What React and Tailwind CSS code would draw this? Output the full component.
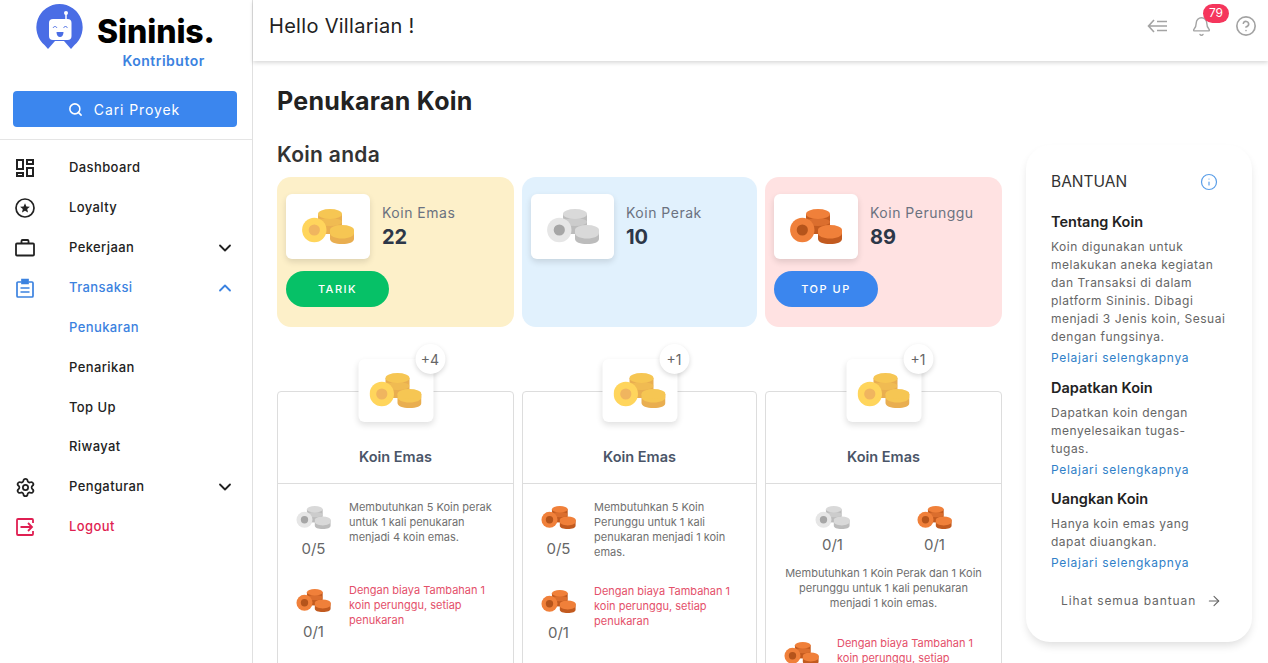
import React from 'react';
import {
  ArrowRight,
  Bell,
  ChevronDown,
  ChevronUp,
  CircleHelp,
  Info,
  Search,
  Settings,
} from 'lucide-react';

const gold = { top: '#f6c653', side: '#e9ae50', face: '#ffd55c', hole: '#f0b55f' };
const silver = { top: '#d9d9d9', side: '#bcbcbc', face: '#e6e6e6', hole: '#a6a6a6' };
const bronze = { top: '#f0803a', side: '#c25a1f', face: '#f0803a', hole: '#b5541b' };

const Coins = ({ c, className }) => (
  <svg viewBox="0 0 52 35" className={className}>
    <path d="M16 5v20h24V5z" fill={c.side} />
    <ellipse cx="28" cy="13" rx="12" ry="4" fill={c.top} opacity="0.55" />
    <ellipse cx="28" cy="5" rx="12" ry="5" fill={c.top} />
    <path d="M28 21v9c0 3 5 5 12 5s12-2 12-5v-9z" fill={c.side} />
    <path d="M28 21v3c0 3 5 5.5 12 5.5s12-2.5 12-5.5v-3z" fill={c.top} />
    <ellipse cx="40" cy="21" rx="12" ry="5" fill={c.top} />
    <circle cx="12.3" cy="21" r="12.2" fill={c.face} />
    <circle cx="12.3" cy="21" r="5.6" fill={c.hole} />
  </svg>
);

const Logo = () => (
  <svg viewBox="0 0 47 46" className="w-[47px] h-[46px] shrink-0">
    <path d="M23.500 0a23.300 23.300 0 0 0-15 41l3.500 4 7-8h9l7 8 3.500-4A23.300 23.300 0 0 0 23.500 0z" fill="#4a6de5" />
    <rect x="13" y="15" width="22.500" height="21" rx="4" fill="#fff" />
    <path d="M30 15V10" stroke="#fff" strokeWidth="1.500" />
    <circle cx="30" cy="9" r="2" fill="#fff" />
    <path d="M17 24c1-2 3-2 4 0M27.500 24c1-2 3-2 4 0" stroke="#4a6de5" strokeWidth="1" fill="none" />
    <path d="M20.500 28h7c0 3-1.500 5-3.500 5s-3.500-2-3.500-5z" fill="#4a6de5" />
  </svg>
);

const DashIcon = () => (
  <svg viewBox="0 0 20 20" className="w-5 h-5" fill="none" stroke="currentColor" strokeWidth="2">
    <rect x="2" y="2" width="6" height="9" />
    <rect x="12" y="2" width="6" height="4" />
    <rect x="2" y="15" width="6" height="3" />
    <rect x="12" y="10" width="6" height="8" />
  </svg>
);

const StarIcon = () => (
  <svg viewBox="0 0 20 20" className="w-5 h-5">
    <circle cx="10" cy="10" r="9" fill="none" stroke="currentColor" strokeWidth="1.700" />
    <path d="M10 5.200l1.400 3.300 3.500.3-2.700 2.300.8 3.500-3-1.800-3 1.800.8-3.500-2.700-2.300 3.500-.3z" fill="currentColor" />
  </svg>
);

const CaseIcon = () => (
  <svg viewBox="0 0 20 20" className="w-5 h-5" fill="none" stroke="currentColor" strokeWidth="1.800">
    <rect x="1" y="5.500" width="18" height="12" rx="1" />
    <path d="M6.500 5.500V3a1 1 0 0 1 1-1h5a1 1 0 0 1 1 1v2.500" />
  </svg>
);

const ClipIcon = () => (
  <svg viewBox="0 0 20 20" className="w-5 h-5" fill="none" stroke="currentColor" strokeWidth="1.700">
    <path d="M6.500 4H3a1 1 0 0 0-1 1v13a1 1 0 0 0 1 1h14a1 1 0 0 0 1-1V5a1 1 0 0 0-1-1h-3.500" />
    <path d="M7 1.500h6v4H7z" fill="currentColor" />
    <path d="M5.500 10h9M5.500 14h9" />
  </svg>
);

const LogoutIcon = () => (
  <svg viewBox="0 0 20 20" className="w-5 h-5" fill="none" stroke="currentColor" strokeWidth="1.800">
    <path d="M18 6V3a1 1 0 0 0-1-1H3a1 1 0 0 0-1 1v14a1 1 0 0 0 1 1h14a1 1 0 0 0 1-1v-3" />
    <path d="M5.500 10H17M13 6l4 4-4 4" />
  </svg>
);

const MenuBackIcon = () => (
  <svg viewBox="0 0 20 14" className="w-5 h-[14px]" fill="none" stroke="currentColor" strokeWidth="1.600">
    <path d="M7 1L1.500 7 7 13M2 7h18M10 2.500h10M10 11.500h10" />
  </svg>
);

const menu = [
  { label: 'Dashboard', icon: <DashIcon /> },
  { label: 'Loyalty', icon: <StarIcon /> },
  { label: 'Pekerjaan', icon: <CaseIcon />, arrow: 'down' },
  { label: 'Transaksi', icon: <ClipIcon />, arrow: 'up', color: 'text-[#3b82e0]' },
  { label: 'Penukaran', color: 'text-[#3b82e0]' },
  { label: 'Penarikan' },
  { label: 'Top Up' },
  { label: 'Riwayat' },
  { label: 'Pengaturan', icon: <Settings size={21} strokeWidth={2} />, arrow: 'down' },
  { label: 'Logout', icon: <LogoutIcon />, color: 'text-[#df1f52]' },
];

const Sidebar = () => (
  <aside className="w-[253px] shrink-0 h-full bg-white border-r border-[#e0e0e0]">
    <div className="h-[140px] border-b border-[#e5e5e5] px-[13px]">
      <div className="flex pl-[23px] pt-[4px] h-[91px]">
        <Logo />
        <div className="ml-[14px] flex flex-col items-end">
          <div className="text-[32px] leading-[34px] mt-[11px] font-extrabold text-black tracking-[-0.1px]">Sininis.</div>
          <div className="text-[14px] leading-[18px] mt-[3px] mr-[10px] font-semibold text-[#3b82e0] tracking-[0.5px]">Kontributor</div>
        </div>
      </div>
      <button className="w-[224px] h-9 rounded bg-[#3b86ee] text-white flex items-center justify-center gap-[11px] pr-[2px] text-[14px] tracking-[0.9px]">
        <Search size={15} strokeWidth={2.500} />
        Cari Proyek
      </button>
    </div>
    <ul className="pt-2">
      {menu.map((item) => (
        <li key={item.label} className={`h-[39.900px] flex items-center text-[13px] font-medium tracking-[0.4px] ${item.color || 'text-[#222]'}`}>
          <span className="w-[69px] pl-[15px] shrink-0">{item.icon}</span>
          <span>{item.label}</span>
          {item.arrow === 'down' && <ChevronDown size={20} strokeWidth={2.200} className="ml-auto mr-[17px]" />}
          {item.arrow === 'up' && <ChevronUp size={20} strokeWidth={2.200} className="ml-auto mr-[17px]" />}
        </li>
      ))}
    </ul>
  </aside>
);

const Header = () => (
  <header className="h-[61px] shrink-0 bg-white shadow-[0_2px_4px_rgba(0,0,0,0.15)] flex items-center pl-4 pr-[11px] pb-[9px] relative z-10">
    <h1 className="text-[20px] text-[#222] tracking-[0.3px]">Hello Villarian !</h1>
    <div className="ml-auto flex items-center text-[#a3a3a3]">
      <MenuBackIcon />
      <div className="relative ml-[24px] mr-[23px]">
        <Bell size={21} strokeWidth={1.600} />
        <span className="absolute -top-[12px] left-[12px] w-[26px] h-[19px] rounded-full bg-[#f5365c] text-white text-[12px] flex items-center justify-center">79</span>
      </div>
      <CircleHelp size={22} strokeWidth={1.800} />
    </div>
  </header>
);

const BalanceCard = ({ coin, name, value, bg, w, tile, button, buttonBg, buttonW }) => (
  <div className={`${w} h-[150px] rounded-[14px] px-[9px] pt-[17px] ${bg}`}>
    <div className="flex items-center gap-3">
      <div className={`${tile} h-[65px] rounded-md bg-white shadow-[0_3px_6px_rgba(0,0,0,0.12)] flex items-center justify-center`}>
        <Coins c={coin} className="w-[52px] h-[35px]" />
      </div>
      <div>
        <div className="text-[14px] leading-5 text-[#6b7280] tracking-[0.5px]">{name}</div>
        <div className="text-[20px] leading-7 font-bold text-[#2d3748]">{value}</div>
      </div>
    </div>
    {button && (
      <button className={`mt-3 h-9 rounded-full text-white text-[11px] font-medium tracking-[1.500px] ${buttonW} ${buttonBg}`}>{button}</button>
    )}
  </div>
);

const CoinCount = ({ c, count, gap, className }) => (
  <div className={`flex flex-col items-center ${className || ''}`}>
    <Coins c={c} className="w-[35px] h-[23px]" />
    <div className={`text-[15px] leading-5 text-[#666] ${gap}`}>{count}</div>
  </div>
);

const note = 'Dengan biaya Tambahan 1 koin perunggu, setiap penukaran';

const ExchangeCard = ({ w, plus, children }) => (
  <div className={`${w} relative h-[340px] border border-[#ddd] rounded bg-white`}>
    <div className="absolute left-1/2 -translate-x-1/2 -top-[33px] w-[75px] h-[63px] rounded-md bg-white shadow-[0_3px_6px_rgba(0,0,0,0.12)] flex items-center justify-center">
      <Coins c={gold} className="w-[52px] h-[35px]" />
      <span className="absolute -top-[15px] -right-[12px] w-[30px] h-[30px] rounded-full bg-white shadow-[0_2px_5px_rgba(0,0,0,0.15)] text-[14px] text-[#666] flex items-center justify-center">{plus}</span>
    </div>
    <div className="h-[92px] border-b border-[#ddd] pt-[55px] text-center text-[14.500px] leading-5 font-semibold text-[#4a5568]">Koin Emas</div>
    {children}
  </div>
);

const Row = ({ c, count, text, red }) => (
  <div className="flex pl-[18px]">
    <CoinCount c={c} count={count} gap="mt-[10px]" className="w-[35px] shrink-0 pt-[6px]" />
    <p className={`ml-[18px] max-w-[146px] text-[11px] leading-[15px] ${red ? 'text-[#e4506a]' : 'text-[#6f6f6f]'}`}>{text}</p>
  </div>
);

const helpItems = [
  {
    title: 'Tentang Koin',
    text: ['Koin digunakan untuk', 'melakukan aneka kegiatan', 'dan Transaksi di dalam', 'platform Sininis. Dibagi', 'menjadi 3 Jenis koin, Sesuai', 'dengan fungsinya.'],
  },
  { title: 'Dapatkan Koin', text: ['Dapatkan koin dengan', 'menyelesaikan tugas-', 'tugas.'] },
  { title: 'Uangkan Koin', text: ['Hanya koin emas yang', 'dapat diuangkan.'] },
];

const HelpPanel = () => (
  <aside className="absolute left-[773px] top-[84px] w-[226px] h-[497px] rounded-[24px] bg-white shadow-[0_5px_10px_-2px_rgba(0,0,0,0.14)] pl-[25px] pr-2 pt-[24px]">
    <div className="flex items-center h-[26px]">
      <span className="text-[15.500px] text-[#333]">BANTUAN</span>
      <Info size={18} strokeWidth={1.600} className="ml-auto mr-[26px] text-[#5a9ee8]" />
    </div>
    {helpItems.map((h, i) => (
      <div key={h.title} className={i === 0 ? 'mt-[17px]' : 'mt-[10.500px]'}>
        <div className="text-[14.500px] leading-5 font-semibold text-[#222]">{h.title}</div>
        <div className="mt-[6px] text-[12px] leading-[18px] text-[#666] tracking-[0.5px] whitespace-nowrap">
          {h.text.map((t) => <div key={t}>{t}</div>)}
        </div>
        <div className="mt-[3px] text-[12px] leading-[18px] text-[#2f80c8] tracking-[0.7px]">Pelajari selengkapnya</div>
      </div>
    ))}
    <div className="mt-[20px] ml-[10px] flex items-center gap-[10px] text-[12px] text-[#666] tracking-[0.9px]">
      Lihat semua bantuan
      <ArrowRight size={16} strokeWidth={1.600} />
    </div>
  </aside>
);

export default function App() {
  return (
    <div className="flex h-screen overflow-hidden bg-white" style={{ fontFamily: 'Inter, "Noto Sans", sans-serif' }}>
      <Sidebar />
      <div className="flex-1 min-w-0 flex flex-col">
        <Header />
        <main className="relative flex-1 min-h-0 overflow-hidden pl-6 pt-[24px]">
          <h2 className="text-[25px] leading-[32px] font-bold text-[#222] tracking-[0.3px]">Penukaran Koin</h2>
          <h3 className="mt-[24px] text-[21px] leading-[28px] font-semibold text-[#333] tracking-[0.3px]">Koin anda</h3>
          <div className="flex gap-2 mt-2">
            <BalanceCard coin={gold} name="Koin Emas" value="22" bg="bg-[#fdf0c9]" w="w-[237px]" tile="w-[84px]" button="TARIK" buttonBg="bg-[#06c167]" buttonW="w-[103px]" />
            <BalanceCard coin={silver} name="Koin Perak" value="10" bg="bg-[#e1f1fd]" w="w-[235px]" tile="w-[83px]" />
            <BalanceCard coin={bronze} name="Koin Perunggu" value="89" bg="bg-[#ffe2e2]" w="w-[237px]" tile="w-[84px]" button="TOP UP" buttonBg="bg-[#3b86ee]" buttonW="w-[104px]" />
          </div>
          <div className="flex gap-2 mt-[64px]">
            <ExchangeCard w="w-[237px]" plus="+4">
              <div className="pt-[16px] flex flex-col gap-[24px]">
                <Row c={silver} count="0/5" text="Membutuhkan 5 Koin perak untuk 1 kali penukaran menjadi 4 koin emas." />
                <Row c={bronze} count="0/1" text={note} red />
              </div>
            </ExchangeCard>
            <ExchangeCard w="w-[235px]" plus="+1">
              <div className="pt-[16px] flex flex-col gap-[24px]">
                <Row c={bronze} count="0/5" text="Membutuhkan 5 Koin Perunggu untuk 1 kali penukaran menjadi 1 koin emas." />
                <Row c={bronze} count="0/1" text={note} red />
              </div>
            </ExchangeCard>
            <ExchangeCard w="w-[237px]" plus="+1">
              <div className="pt-[22px]">
                <div className="flex justify-center gap-[67px]">
                  <CoinCount c={silver} count="0/1" gap="mt-[6px]" />
                  <CoinCount c={bronze} count="0/1" gap="mt-[6px]" />
                </div>
                <p className="mt-[11px] px-4 text-center text-[11px] leading-[15px] text-[#6f6f6f]">Membutuhkan 1 Koin Perak dan 1 Koin perunggu untuk 1 kali penukaran menjadi 1 koin emas.</p>
                <div className="mt-[25px]">
                  <Row c={bronze} count="0/1" text={note} red />
                </div>
              </div>
            </ExchangeCard>
          </div>
          <HelpPanel />
        </main>
      </div>
    </div>
  );
}
